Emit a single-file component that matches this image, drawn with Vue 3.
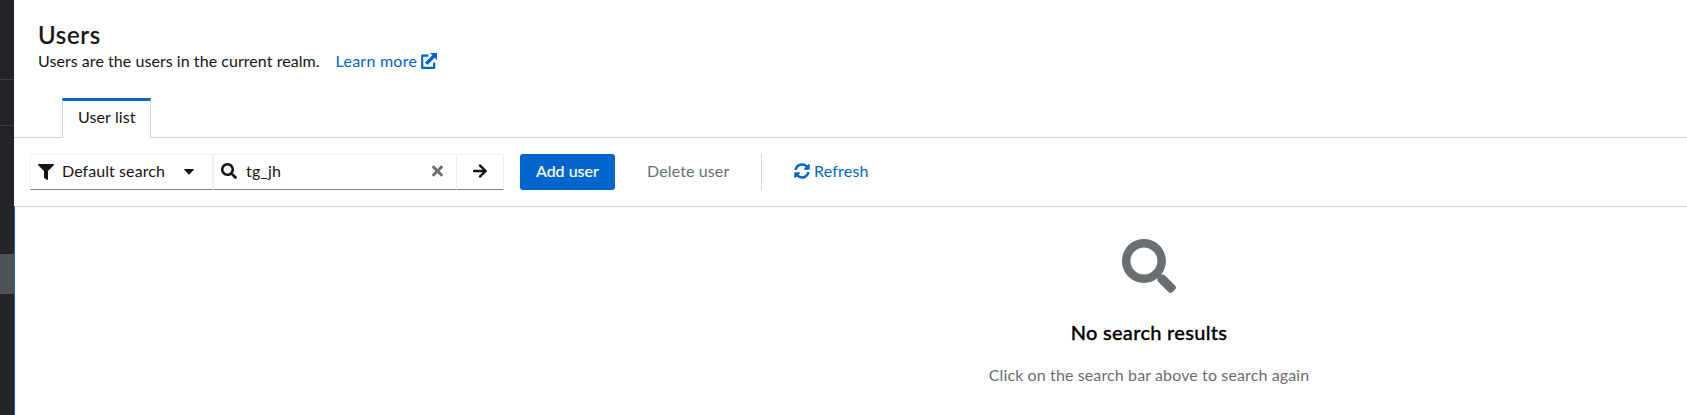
<script setup>
const icons = {
  search: 'M505 442.700 405.300 343c-4.500-4.500-10.600-7-17-7H372c27.600-35.300 44-79.700 44-128C416 93.100 322.900 0 208 0S0 93.100 0 208s93.100 208 208 208c48.300 0 92.700-16.400 128-44v16.300c0 6.400 2.500 12.500 7 17l99.700 99.700c9.400 9.400 24.600 9.400 33.900 0l28.300-28.300c9.400-9.400 9.400-24.600.1-34zM208 336c-70.700 0-128-57.200-128-128 0-70.700 57.200-128 128-128 70.700 0 128 57.200 128 128 0 70.700-57.200 128-128 128z',
  filter: 'M487.976 0H24.028C2.710 0-8.047 25.866 7.058 40.971L192 225.941V432c0 7.831 3.821 15.170 10.237 19.662l80 55.980C298.020 518.690 320 507.493 320 487.980V225.941l184.947-184.970C520.021 25.896 509.338 0 487.976 0z',
  times: 'M242.720 256l100.070-100.070c12.280-12.280 12.280-32.190 0-44.480l-22.240-22.240c-12.280-12.280-32.190-12.280-44.480 0L176 189.280 75.930 89.210c-12.280-12.280-32.190-12.280-44.480 0L9.210 111.450c-12.280 12.280-12.280 32.190 0 44.480L109.280 256 9.210 356.070c-12.280 12.280-12.280 32.190 0 44.480l22.240 22.240c12.280 12.280 32.200 12.280 44.480 0L176 322.720l100.070 100.070c12.280 12.280 32.200 12.280 44.480 0l22.240-22.240c12.280-12.280 12.280-32.190 0-44.480L242.720 256z',
  arrow: 'M190.500 66.900l22.200-22.200c9.400-9.400 24.600-9.400 33.900 0L441 239c9.400 9.400 9.400 24.600 0 33.900L246.600 467.300c-9.400 9.400-24.600 9.400-33.900 0l-22.200-22.200c-9.500-9.500-9.300-25 .4-34.300L311.400 296H24c-13.300 0-24-10.700-24-24v-32c0-13.300 10.700-24 24-24h287.400L190.900 101.200c-9.800-9.300-10-24.800-.4-34.300z',
  sync: 'M370.720 133.280C339.458 104.008 298.888 87.962 255.848 88c-77.458.068-144.328 53.178-162.791 126.850-1.344 5.363-6.122 9.150-11.651 9.150H24.103c-7.498 0-13.194-6.807-11.807-14.176C33.933 94.924 134.813 8 256 8c66.448 0 126.791 26.136 171.315 68.685L463.030 40.970C478.149 25.851 504 36.559 504 57.941V192c0 13.255-10.745 24-24 24H345.941c-21.382 0-32.090-25.851-16.971-40.971l41.750-41.749zM32 296h134.059c21.382 0 32.090 25.851 16.971 40.971l-41.750 41.750c31.262 29.273 71.835 45.319 114.876 45.280 77.418-.070 144.315-53.144 162.787-126.849 1.344-5.363 6.122-9.150 11.651-9.150h57.304c7.498 0 13.194 6.807 11.807 14.176C478.067 417.076 377.187 504 256 504c-66.448 0-126.791-26.136-171.315-68.685L48.970 471.030C33.851 486.149 8 475.441 8 454.059V320c0-13.255 10.745-24 24-24z',
}
</script>

<template>
  <div class="app">
    <aside class="sidebar">
      <div class="group first"></div>
      <div class="group second"></div>
      <div class="group third"></div>
      <div class="current"></div>
    </aside>
    <main class="page">
      <header class="header">
        <h1>Users</h1>
        <div class="intro">
          <span class="t-intro">Users are the users in the current realm.</span>
          <a class="learn"><span class="t-learn">Learn more</span>
            <svg class="ext" viewBox="0 0 16 16"><path d="M7.500 2.600H1.200V14.800H13.200V9.500" fill="none" stroke="currentColor" stroke-width="2.200" stroke-linejoin="round" /><path d="M9 0H16V7L13.700 4.700 6.500 11.900 4.100 9.500 11.300 2.300Z" /></svg>
          </a>
        </div>
      </header>
      <nav class="tabs"><div class="tab"><span class="t-tab">User list</span></div></nav>
      <div class="toolbar">
        <div class="field select">
          <svg class="i16" viewBox="0 0 512 512"><path :d="icons.filter" /></svg>
          <span class="t-select">Default search</span>
          <svg class="caret" viewBox="0 0 10 6"><path d="M.8 0H9.200Q10.300 .2 9.600 1.100L5.600 5.200Q5 5.700 4.400 5.200L.4 1.100Q-.3 .2 .8 0Z" /></svg>
        </div>
        <div class="field search">
          <svg class="i16" viewBox="0 0 512 512"><path :d="icons.search" /></svg>
          <span class="t-query">tg_jh</span>
          <svg class="clear" viewBox="0 0 352 512"><path :d="icons.times" /></svg>
        </div>
        <div class="field go"><svg viewBox="0 0 448 512"><path :d="icons.arrow" /></svg></div>
        <button class="add">Add user</button>
        <button class="delete">Delete user</button>
        <div class="divider"></div>
        <a class="refresh"><svg class="i16" viewBox="0 0 512 512"><path :d="icons.sync" /></svg><span class="t-refresh">Refresh</span></a>
      </div>
      <section class="empty">
        <svg class="big" viewBox="0 0 512 512"><path :d="icons.search" /></svg>
        <h2>No search results</h2>
        <p>Click on the search bar above to search again</p>
      </section>
    </main>
  </div>
</template>

<style>
body { margin: 0; background: #fff; }
</style>

<style scoped>
* { box-sizing: border-box; }
.app { display: flex; width: 100%; height: 415px; overflow: hidden; font: 16px/24px Lato, "Open Sans", sans-serif; color: #151515; }
svg { display: block; fill: currentColor; flex: none; }
h1, h2, p { margin: 0; white-space: nowrap; }
span { white-space: nowrap; }
button { border: 0; padding: 0 0 2px 16px; background: none; font: inherit; height: 36px; text-align: left; }
.sidebar { width: 14px; flex: none; background: #232428; }
.group { border-bottom: 1px solid #3c3f42; }
.first { height: 80px; }
.second { height: 46px; }
.third { height: 128px; border: 0; }
.current { height: 40px; background: #4f5255; }
.page { flex: 1; min-width: 0; display: flex; flex-direction: column; }
.header { height: 98px; padding: 19px 24px 0; }
h1 { font-size: 24px; line-height: 31px; font-weight: 500; letter-spacing: .7px; -webkit-text-stroke: .2px currentColor; }
.intro { display: flex; align-items: center; height: 24px; margin-top: -1px; }
.t-intro { letter-spacing: .05px; }
.learn { display: flex; align-items: center; margin-left: 16px; color: #06c; }
.t-learn { letter-spacing: .25px; }
.ext { width: 16px; height: 16px; margin-left: 4px; }
.tabs { height: 40px; display: flex; border-bottom: 1px solid #d2d2d2; padding-left: 48px; }
.tab { width: 89px; height: 40px; border: 1px solid #d2d2d2; border-top: 3px solid #06c; border-bottom: 0; background: #fff; padding: 4px 0 0 15px; letter-spacing: .12px; }
.toolbar { height: 69px; padding: 16px 16px; display: flex; border-bottom: 1px solid #d2d2d2; }
.toolbar span { margin-top: -2px; }
.field { height: 36px; display: flex; align-items: center; border: 1px solid #f0f0f0; border-bottom-color: #808285; }
.i16 { width: 16px; height: 16px; }
.select { width: 183px; padding-left: 7px; }
.select span { margin-left: 8px; width: 104px; letter-spacing: .08px; }
.caret { width: 10px; height: 6px; margin-left: 18px; }
.search { width: 244px; padding-left: 7px; }
.search .i16 { margin-top: -2px; }
.search span { margin-left: 9px; flex: 1; letter-spacing: .2px; }
.clear { width: 11px; height: 16px; margin-right: 13px; margin-top: -2px; color: #6a6e73; }
.go { width: 47px; justify-content: center; border-left: 0; }
.go svg { width: 14px; height: 16px; margin-top: -2px; }
.add { width: 95px; margin-left: 16px; border-radius: 3px; background: #06c; color: #fff; -webkit-text-stroke: .2px currentColor; }
.delete { width: 114px; margin-left: 16px; color: #6a6e73; letter-spacing: .12px; }
.divider { width: 1px; height: 36px; background: #d2d2d2; margin-left: 16px; }
.refresh { display: flex; align-items: center; height: 36px; color: #06c; margin-left: 32px; letter-spacing: .2px; }
.refresh span { margin-left: 4px; }
.refresh svg { margin-top: -2px; }
.empty { flex: 1; border-left: 1px solid #06c; margin-top: -1px; padding: 33px 0 0 596px; display: flex; flex-direction: column; align-items: center; }
.big { width: 54px; height: 54px; color: #6a6e73; }
h2 { margin-top: 24px; font-size: 20px; line-height: 30px; font-weight: 500; color: #000; letter-spacing: .3px; -webkit-text-stroke: .3px currentColor; }
p { margin-top: 16px; color: #6a6e73; letter-spacing: .12px; }
</style>
